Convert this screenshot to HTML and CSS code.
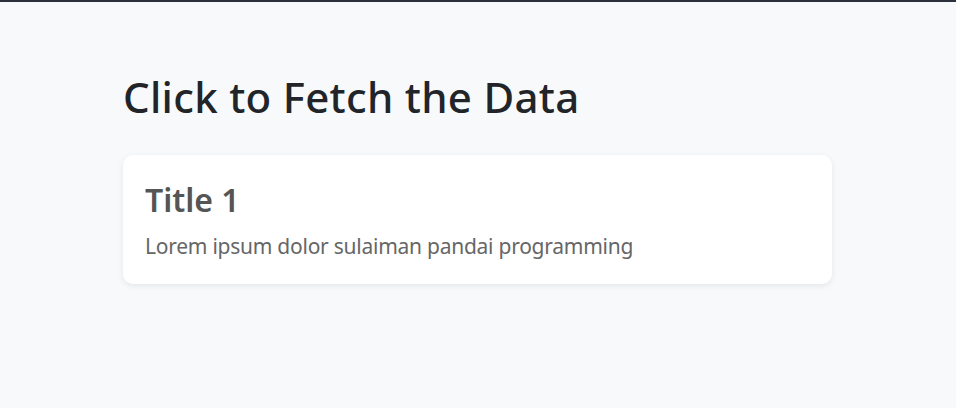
FILE: index.html
```html
<!DOCTYPE html>
<html>
<head>
<meta charset="utf-8">
<link rel="stylesheet" href="styles.css">
</head>
<body>
<div class="topbar"></div>
<main class="container">
  <h1 class="page-title">Click to Fetch the Data</h1>
  <div class="card">
    <h3 class="card-title">Title 1</h3>
    <p class="card-text">Lorem ipsum dolor sulaiman pandai programming</p>
  </div>
</main>
</body>
</html>
```
FILE: styles.css
```css
html, body {
  margin: 0;
  padding: 0;
  height: 100%;
}
body {
  background: #f8f9fa;
  font-family: "Noto Sans", "Open Sans", sans-serif;
  color: #212529;
}
.topbar {
  height: 2px;
  background: #2b303b;
}
.container {
  display: flex;
  flex-direction: column;
  padding: 0 124px 0 123px;
}
.page-title {
  margin: 70px 0 0 0;
  font-size: 42px;
  font-weight: 500;
  line-height: 50px;
  letter-spacing: 0.3px;
  color: #212529;
}
.card {
  margin-top: 33px;
  background: #fff;
  border-radius: 10px;
  box-shadow: 0 2px 6px rgba(0,0,0,0.08);
  padding: 26px 22px 23px 22px;
  display: flex;
  flex-direction: column;
}
.card-title {
  margin: 0;
  font-size: 32px;
  font-weight: 600;
  line-height: 38px;
  color: #555;
}
.card-text {
  margin: 12px 0 0 0;
  font-size: 21px;
  line-height: 30px;
  letter-spacing: -0.25px;
  color: #666;
}
```
